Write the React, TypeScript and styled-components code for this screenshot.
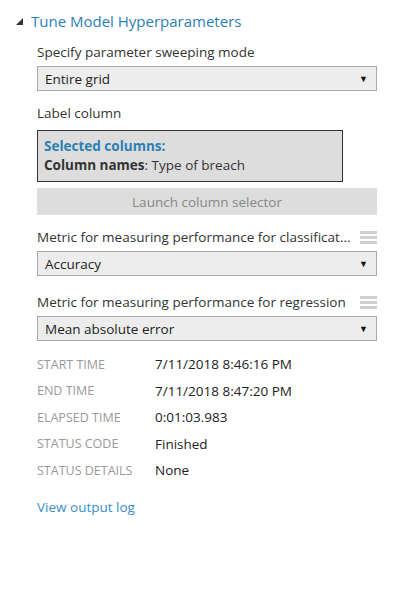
import React from "react";
import styled, { createGlobalStyle } from "styled-components";

const GlobalStyle = createGlobalStyle`
  body {
    margin: 0;
    background: #fff;
    font-family: "Open Sans", "Noto Sans", sans-serif;
    color: #333;
  }
`;

const Panel = styled.div`
  width: 414px;
  height: 609px;
  padding: 11px 0 0 0;
  box-sizing: border-box;
`;

const Header = styled.div`
  display: flex;
  align-items: center;
  padding-left: 16px;
  gap: 8px;
  height: 20px;
  color: #2b7fb4;
  font-size: 15px;
`;

const Caret = styled.svg`
  width: 7px;
  height: 7px;
  fill: #333;
`;

const Body = styled.div`
  padding: 0 37px;
  display: flex;
  flex-direction: column;
`;

const Label = styled.div<{ $top: number }>`
  margin-top: ${(p) => p.$top}px;
  font-size: 13.5px;
  line-height: 18px;
  color: #333;
  display: flex;
  align-items: center;
  justify-content: space-between;
  width: 340px;
  white-space: nowrap;
`;

const Grip = styled.div`
  width: 17px;
  display: flex;
  flex-direction: column;
  gap: 2px;
  span {
    display: block;
    height: 3px;
    background: #cfcfcf;
  }
`;

const Select = styled.div<{ $top: number }>`
  margin-top: ${(p) => p.$top}px;
  width: 340px;
  height: 25px;
  box-sizing: border-box;
  border: 1px solid #a9a9a9;
  background: #ededed;
  display: flex;
  align-items: center;
  justify-content: space-between;
  padding: 0 8px 0 7px;
  font-size: 13.5px;
  color: #222;
`;

const Arrow = styled.span`
  font-size: 9px;
  color: #111;
`;

const ColumnsBox = styled.div`
  margin-top: 8px;
  width: 306px;
  height: 52px;
  box-sizing: border-box;
  border: 1px solid #333;
  background: #dddddd;
  padding: 6px 0 0 6px;
  font-size: 13.5px;
  line-height: 19px;
  color: #333;
`;

const BoxTitle = styled.div`
  color: #2b7fb4;
  font-weight: 700;
`;

const Strong = styled.b`
  font-weight: 700;
`;

const LaunchButton = styled.div`
  margin-top: 6px;
  width: 340px;
  height: 27px;
  background: #dddddd;
  color: #888;
  font-size: 13.5px;
  display: flex;
  align-items: center;
  justify-content: center;
`;

const InfoGrid = styled.div`
  margin-top: 10px;
  display: grid;
  grid-template-columns: 118px 1fr;
  grid-auto-rows: 26.5px;
  align-items: center;
`;

const InfoKey = styled.div`
  font-size: 12.5px;
  color: #999;
  text-transform: uppercase;
`;

const InfoValue = styled.div`
  font-size: 13.5px;
  color: #222;
`;

const Link = styled.a`
  margin-top: 14px;
  font-size: 13.5px;
  color: #3a8ec8;
  text-decoration: none;
`;

const info: [string, string][] = [
  ["Start time", "7/11/2018 8:46:16 PM"],
  ["End time", "7/11/2018 8:47:20 PM"],
  ["Elapsed time", "0:01:03.983"],
  ["Status code", "Finished"],
  ["Status details", "None"],
];

const GripIcon = () => (
  <Grip>
    <span />
    <span />
    <span />
  </Grip>
);

export default function App() {
  return (
    <Panel>
      <GlobalStyle />
      <Header>
        <Caret viewBox="0 0 7 7">
          <polygon points="7,0 7,7 0,7" />
        </Caret>
        Tune Model Hyperparameters
      </Header>
      <Body>
        <Label $top={12}>
          <span>Specify parameter sweeping mode</span>
        </Label>
        <Select $top={5}>
          Entire grid <Arrow>▼</Arrow>
        </Select>
        <Label $top={13}>
          <span>Label column</span>
        </Label>
        <ColumnsBox>
          <BoxTitle>Selected columns:</BoxTitle>
          <div>
            <Strong>Column names</Strong>: Type of breach
          </div>
        </ColumnsBox>
        <LaunchButton>Launch column selector</LaunchButton>
        <Label $top={13}>
          <span>Metric for measuring performance for classificat...</span>
          <GripIcon />
        </Label>
        <Select $top={5}>
          Accuracy <Arrow>▼</Arrow>
        </Select>
        <Label $top={17}>
          <span>Metric for measuring performance for regression</span>
          <GripIcon />
        </Label>
        <Select $top={5}>
          Mean absolute error <Arrow>▼</Arrow>
        </Select>
        <InfoGrid>
          {info.map(([k, v]) => (
            <React.Fragment key={k}>
              <InfoKey>{k}</InfoKey>
              <InfoValue>{v}</InfoValue>
            </React.Fragment>
          ))}
        </InfoGrid>
        <Link href="#">View output log</Link>
      </Body>
    </Panel>
  );
}
